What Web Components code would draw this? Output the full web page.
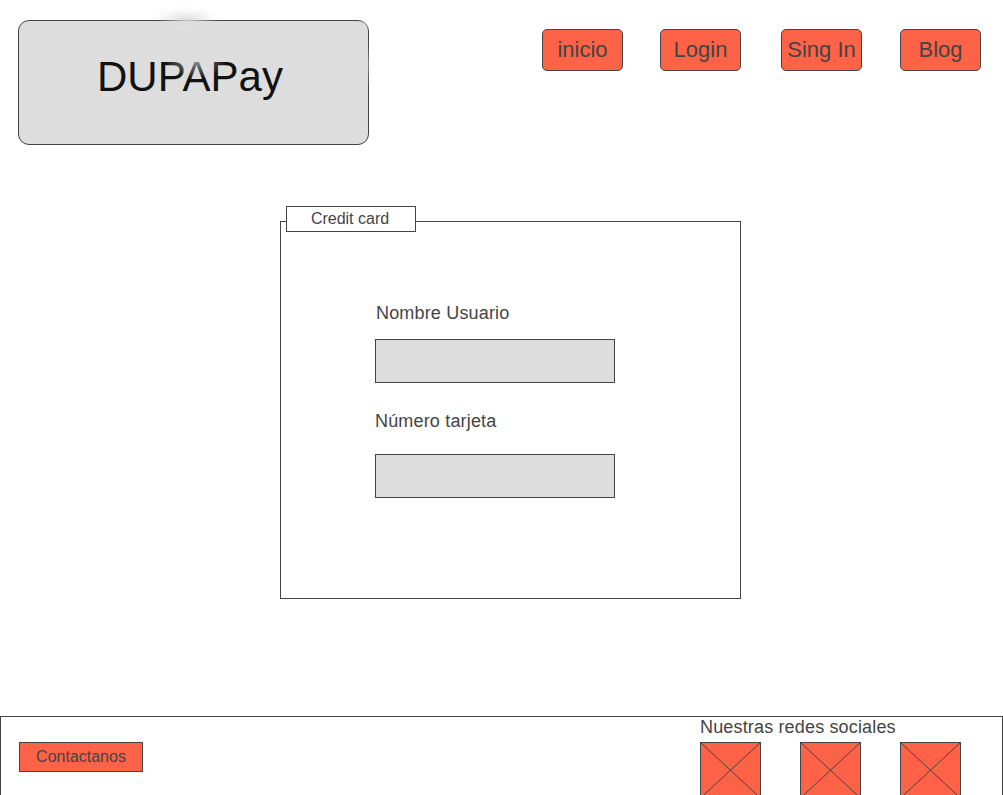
<!DOCTYPE html>
<html lang="es">
<head>
<meta charset="utf-8">
<title>DUPAPay</title>
<style>
html,body{margin:0;height:100%;overflow:hidden;background:#fff}
body{font-family:"Liberation Sans",Arial,sans-serif;color:#444;--line:#444;--accent:#ff6347;--fill:#ddd}
</style>
</head>
<body>
<pay-page></pay-page>
<script>
const define = (name, html) => {
  const t = document.createElement('template');
  t.innerHTML = html;
  customElements.define(name, class extends HTMLElement {
    constructor() {
      super();
      this.attachShadow({mode: 'open'}).appendChild(t.content.cloneNode(true));
    }
  });
};

define('pay-logo', `<style>
:host{display:block;position:relative;box-sizing:border-box;width:351px;height:125px;border:1px solid var(--line);border-radius:11px;background:var(--fill);padding:31px 0 0 78px;font-size:42px;line-height:50px;color:#111;white-space:nowrap}
span{position:absolute}
.glow{left:129px;top:-15px;width:76px;height:14px;background:radial-gradient(ellipse 38px 14px at 50% 100%,#ddd 0,#ececec 35%,#fafafa 70%,#fff0 100%)}
.edge{left:139px;top:-1px;width:60px;height:1px;background:linear-gradient(90deg,#ddd0,#dddc 45%,#dddc 55%,#ddd0)}
.streak{left:160px;top:5px;width:11px;height:4px;background:linear-gradient(#e4e4e4,#dedede);clip-path:polygon(0 0,100% 0,70% 100%,0 100%)}
.shine{left:145px;top:24px;width:62px;height:36px;background:radial-gradient(ellipse 31px 20px at 50% 40%,#ddda 0,#ddd0 100%)}
.corner{left:339px;top:-1px;width:11px;height:12px;background:radial-gradient(circle at 70% 30%,#ddd7,#ddd0 70%);border-top-right-radius:11px}
.side{left:349px;top:22px;width:1px;height:44px;background:linear-gradient(#ddd0,#ddd6,#ddd0)}
</style><slot></slot><span class="glow"></span><span class="edge"></span><span class="streak"></span><span class="shine"></span><span class="corner"></span><span class="side"></span>`);

define('nav-button', `<style>
:host{display:block;box-sizing:border-box;width:81px;height:42px;border:1px solid var(--line);border-radius:5px;background:var(--accent);font-size:22px;line-height:40px;text-align:center;white-space:nowrap}
</style><slot></slot>`);

define('card-panel', `<style>
:host{display:block;box-sizing:border-box;position:relative;width:461px;height:378px;border:1px solid var(--line);padding:79px 0 0 94px}
.tab{position:absolute;left:5px;top:-16px;box-sizing:border-box;width:130px;height:26px;border:1px solid var(--line);background:#fff;font-size:16px;line-height:24px;text-align:center;padding-right:2px}
</style><div class="tab"><slot name="tab"></slot></div><slot></slot>`);

define('card-field', `<style>
:host{display:block;width:240px;font-size:18px;line-height:24px;letter-spacing:.17px}
.box{box-sizing:border-box;height:44px;margin-top:var(--gap,14px);border:1px solid var(--line);background:var(--fill)}
.label{padding-left:var(--indent,0)}
</style><div class="label"><slot></slot></div><div class="box"></div>`);

define('contact-button', `<style>
:host{display:block;box-sizing:border-box;width:124px;height:30px;border:1px solid var(--line);background:var(--accent);font-size:16px;line-height:28px;text-align:center}
</style><slot></slot>`);

define('social-icon', `<style>
:host{display:block;width:61px;height:57px}svg{display:block}
</style><svg width="61" height="57"><rect x=".5" y=".5" width="60" height="56" fill="#ff6347" stroke="#444"/><path d="M.5 .5L60.5 56M60.5 .5L.5 56" stroke="#444" fill="none"/></svg>`);

define('page-footer', `<style>
:host{display:flex;justify-content:space-between;box-sizing:border-box;height:100px;border:1px solid var(--line);padding:0 41px 0 18px}
.left{padding-top:25px}
.right{width:261px}
.title{height:25px;font-size:18px;line-height:20px;letter-spacing:.16px;white-space:nowrap}
.icons{display:flex;gap:39px}
</style><div class="left"><contact-button>Contactanos</contact-button></div>
<div class="right"><div class="title">Nuestras redes sociales</div><div class="icons"><social-icon></social-icon><social-icon></social-icon><social-icon></social-icon></div></div>`);

define('pay-page', `<style>
:host{display:flex;flex-direction:column;width:1003px;height:795px;overflow:hidden}
header{display:flex;justify-content:space-between;height:201px;padding:20px 22px 0 18px;flex:none}
nav{display:grid;grid-template-columns:118px 121px 119px 81px;padding-top:9px}
main{height:495px;padding-left:280px;flex:none}
page-footer{flex:none}
.n{--gap:14px;--indent:1px}
.t{margin-top:26px;--gap:21px}
</style>
<header><pay-logo>DUPAPay</pay-logo><nav><nav-button>inicio</nav-button><nav-button>Login</nav-button><nav-button>Sing In</nav-button><nav-button>Blog</nav-button></nav></header>
<main><card-panel><span slot="tab">Credit card</span><card-field class="n">Nombre Usuario</card-field><card-field class="t">Número tarjeta</card-field></card-panel></main>
<page-footer></page-footer>`);
</script>
</body>
</html>
